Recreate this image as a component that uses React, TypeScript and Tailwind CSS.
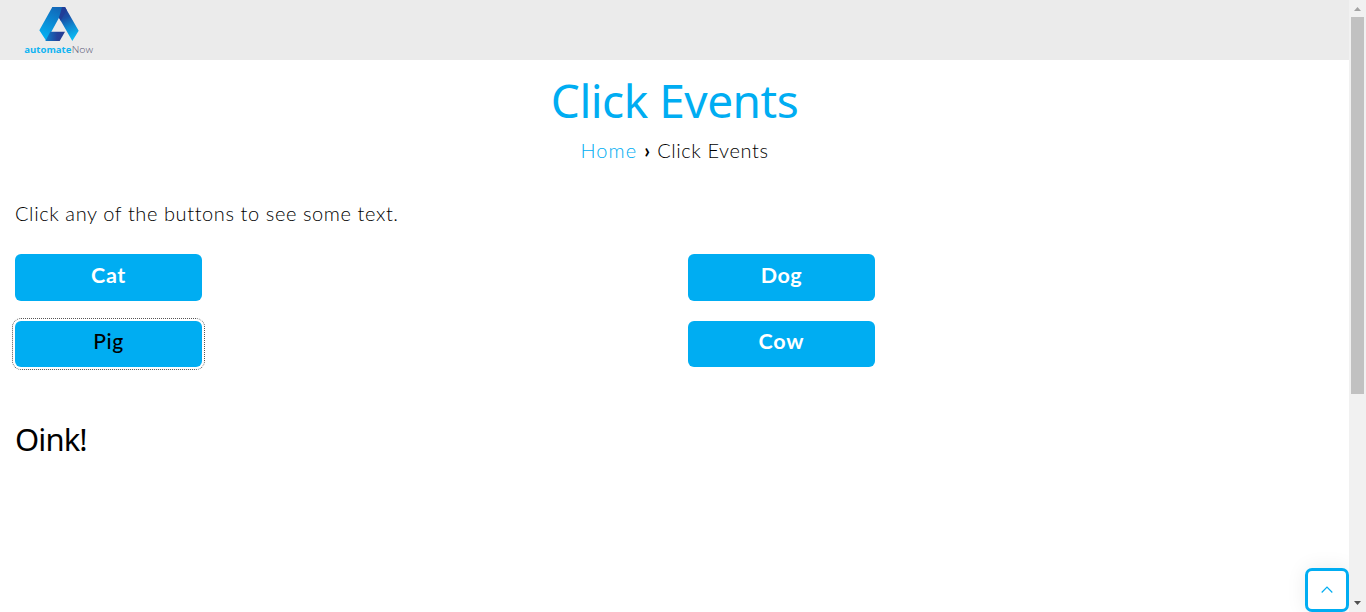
import { useState } from "react";

const bodyFont = "font-['Lato','Open_Sans',sans-serif]";
const headFont = "font-['Noto_Sans','Open_Sans',sans-serif]";

const sounds: Record<string, string> = { Cat: "Meow!", Dog: "Woof!", Pig: "Oink!", Cow: "Moo!" };

function Logo() {
  return (
    <svg width="100" height="60" viewBox="0 0 300 180" className="ml-[10px] block" aria-label="automateNow">
      <defs>
        <linearGradient id="left" gradientUnits="userSpaceOnUse" x1="145" y1="25" x2="100" y2="110">
          <stop offset="0" stopColor="#1268b8" />
          <stop offset="0.5" stopColor="#0a8ad4" />
          <stop offset="1" stopColor="#04aef0" />
        </linearGradient>
        <linearGradient id="right" gradientUnits="userSpaceOnUse" x1="155" y1="25" x2="195" y2="115">
          <stop offset="0" stopColor="#213c96" />
          <stop offset="0.3" stopColor="#1a4fa5" />
          <stop offset="0.6" stopColor="#0f86cf" />
          <stop offset="1" stopColor="#0abdf5" />
        </linearGradient>
        <linearGradient id="base" x1="0" y1="0" x2="1" y2="0">
          <stop offset="0" stopColor="#0a80cc" />
          <stop offset="0.6" stopColor="#24429b" />
          <stop offset="1" stopColor="#263b92" />
        </linearGradient>
      </defs>
      <path d="M127 21H165L206 92L187 123L147 53Z" fill="url(#right)" />
      <path d="M127 21H165L147 53L109 123L88 91Z" fill="url(#left)" />
      <path d="M156 21H165L170 30L152 62L147 53Z" fill="#203e98" />
      <path d="M121 95H165L149 123H106Z" fill="url(#base)" />
      <text x="43" y="158" fontSize="27" textLength="141" lengthAdjust="spacingAndGlyphs" className="fill-[#10b4f2] font-['Open_Sans',sans-serif] font-bold">automate</text>
      <text x="185" y="158" fontSize="28" textLength="64" lengthAdjust="spacingAndGlyphs" className="fill-[#5c5a78] font-['Open_Sans',sans-serif] font-light">Now</text>
    </svg>
  );
}

function AnimalButton({ name, active, onClick }: { name: string; active: boolean; onClick: () => void }) {
  return (
    <button
      onClick={onClick}
      className={`flex w-[187px] justify-center rounded-[6px] bg-[#00adf2] leading-[27px] ${bodyFont} ${
        active
          ? "pt-[6px] text-[21px] font-medium tracking-[0.6px] text-black outline-1 outline-offset-2 outline-dotted outline-[#555]"
          : name === "Cow"
            ? "pt-[7px] text-[21.5px] font-bold tracking-[0.8px] text-white"
            : "pt-[8px] text-[21.5px] font-bold tracking-[0.6px] text-white"
      }`}
    >
      {name}
    </button>
  );
}

export default function App() {
  const [animal, setAnimal] = useState("Pig");
  return (
    <div className={`flex h-[612px] w-[1366px] overflow-hidden bg-white text-black ${bodyFont}`}>
      <div className="relative flex w-[1349px] flex-col">
        <header className="h-[60px] bg-[#ebebeb]">
          <Logo />
        </header>
        <div className="flex flex-col items-center pt-[9px]">
          <h1 className={`text-[46px] leading-[62px] tracking-[-0.5px] whitespace-nowrap text-[#00adf2] ${headFont}`}>Click Events</h1>
          <nav className="mt-[4px] flex gap-[7px] text-[20px] leading-[30px] font-light whitespace-nowrap">
            <a className="tracking-[1.1px] text-[#00adf2]">Home</a>
            <span className="font-bold">›</span>
            <span className="tracking-[0.6px]">Click Events</span>
          </nav>
        </div>
        <main className="px-[15px] pt-[33px]">
          <p className="text-[20px] leading-[30px] font-light tracking-[0.6px] whitespace-nowrap">Click any of the buttons to see some text.</p>
          <div className="mt-[26px] grid grid-cols-[673px_1fr] grid-rows-[47px_46px] gap-y-[20px]">
            {Object.keys(sounds).filter((name) => name !== "Cow").concat("Cow").map((name) => (
              <AnimalButton key={name} name={name} active={name === animal} onClick={() => setAnimal(name)} />
            ))}
          </div>
          <h2 className={`mt-[51px] text-[31px] leading-[42px] tracking-[-0.9px] ${headFont}`}>{sounds[animal]}</h2>
        </main>
        <button aria-label="Back to top" className="absolute right-0 bottom-0 flex h-[44px] w-[44px] items-center justify-center rounded-[7px] border-3 border-[#00adf2] bg-white shadow-[0_0_20px_rgba(0,0,0,0.08)]">
          <svg width="12" height="8" viewBox="0 0 12 8" fill="none" stroke="#00adf2" strokeWidth="1.2">
            <path d="M0.7 6.5L6 1.2L11.3 6.5" />
          </svg>
        </button>
      </div>
      <div className="relative flex w-[17px] flex-col items-center bg-[#f1f1f1]">
        <svg width="17" height="17" viewBox="0 0 17 17"><path d="M5 11L8.5 7L12 11Z" fill="#a3a3a3" /></svg>
        <div className="w-[13px] grow-0 basis-[377px] bg-[#c1c1c1]" />
        <div className="grow" />
        <svg width="17" height="17" viewBox="0 0 17 17"><path d="M5 6L8.5 10L12 6Z" fill="#505050" /></svg>
      </div>
    </div>
  );
}
